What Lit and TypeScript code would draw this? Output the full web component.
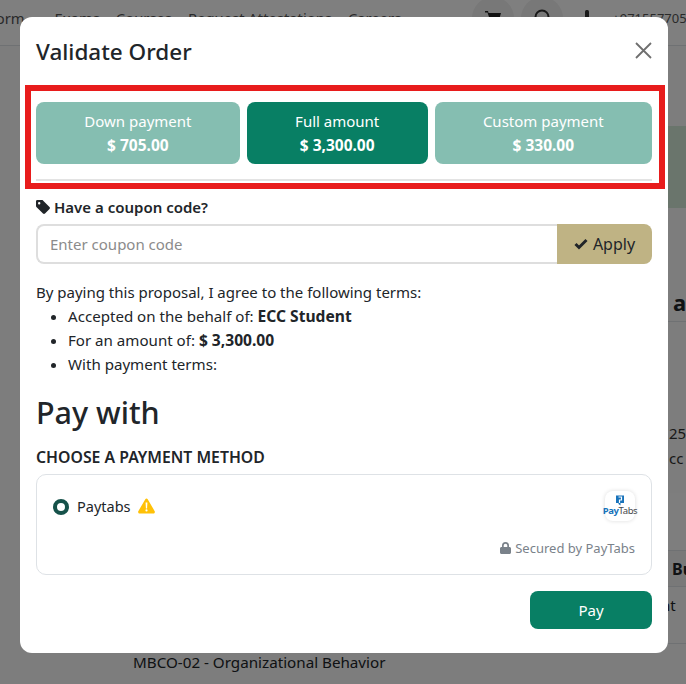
import { LitElement, html, css } from "lit";
import { customElement } from "lit/decorators.js";

const plans = [
  { name: "Down payment", amount: "$ 705.00", active: false },
  { name: "Full amount", amount: "$ 3,300.00", active: true },
  { name: "Custom payment", amount: "$ 330.00", active: false },
];

@customElement("app-root")
export class AppRoot extends LitElement {
  static styles = css`
    :host {
      display: block;
      position: relative;
      width: 686px;
      height: 684px;
      overflow: hidden;
      background: #fafafa;
      color: #212529;
      font-family: "Noto Sans", "Open Sans", sans-serif;
      font-size: 15px;
    }
    svg {
      display: block;
      flex: none;
    }

    /* page behind the dialog */
    .nav {
      height: 46px;
      box-sizing: border-box;
      background: #fff;
      border-bottom: 1px solid #dee2e6;
      display: flex;
      align-items: flex-start;
      gap: 16px;
      white-space: nowrap;
      font-size: 14.8px;
      line-height: 36px;
      color: #555;
      margin-left: -12px;
    }
    .caret {
      display: inline-block;
      margin-left: 6px;
      vertical-align: 2px;
      border: 4px solid transparent;
      border-top-color: #222;
      border-bottom: 0;
    }
    .tools {
      display: flex;
      align-items: flex-start;
      margin-left: 55px;
    }
    .round {
      width: 42px;
      height: 42px;
      margin-top: -3px;
      margin-right: 7px;
      border-radius: 50%;
      background: #f0f0f0;
      display: flex;
      align-items: center;
      justify-content: center;
    }
    .phone-icon {
      margin: 10px 22px 0 14px;
    }
    .number {
      font-size: 13px;
    }
    .band {
      height: 82px;
      margin: 80px 0 0 133px;
      background: #d4ead9;
    }
    .side {
      margin-left: 133px;
      padding-left: 540px;
      white-space: nowrap;
      overflow: hidden;
    }
    .side.heading {
      height: 38px;
      margin-top: 76px;
      border-bottom: 1px solid #dee2e6;
      box-sizing: border-box;
      font-size: 22px;
      font-weight: 700;
      line-height: 36px;
    }
    .side.lines {
      padding-left: 536px;
      margin-top: 99px;
      height: 72px;
      line-height: 25px;
      font-size: 15px;
      color: #333;
    }
    .side.tinted {
      height: 57px;
      background: #fdfdfd;
    }
    .side.cell {
      height: 37px;
      display: flex;
      align-items: center;
      gap: 4px;
      padding-left: 535px;
      border-top: 1px solid #dee2e6;
      border-bottom: 1px solid #dee2e6;
      background: #f3f3f3;
      box-sizing: border-box;
      font-weight: 700;
      font-size: 16px;
    }
    .book {
      width: 2px;
      height: 14px;
      background: #2a6fb5;
    }
    .side.end {
      height: 57px;
      border-bottom: 1px solid #dee2e6;
      box-sizing: border-box;
      padding-left: 528px;
      line-height: 36px;
    }
    .course {
      padding-left: 133px;
      margin-top: 7px;
      font-size: 15.2px;
      line-height: 22px;
    }

    /* dialog */
    .backdrop {
      position: absolute;
      inset: 0;
      background: rgba(0, 0, 0, 0.5);
      padding: 17px 18px 0 20px;
      box-sizing: border-box;
    }
    .modal {
      height: 636px;
      background: #fff;
      border-radius: 12px;
      padding: 0 16px;
      box-sizing: border-box;
    }
    .head {
      height: 68px;
      display: flex;
      align-items: center;
      justify-content: space-between;
      padding-top: 2px;
      box-sizing: border-box;
    }
    .close {
      margin-bottom: 3px;
    }
    h5 {
      margin: 0;
      font-size: 22.5px;
      font-weight: 500;
      line-height: 30px;
    }
    .plans-wrap {
      position: relative;
      margin-top: 17px;
      height: 79px;
      border-bottom: 2px solid #e3e3e3;
      box-sizing: border-box;
    }
    .marker {
      position: absolute;
      left: -11px;
      right: -13px;
      top: -17px;
      height: 104px;
      border: 6px solid #e81c1c;
      box-sizing: border-box;
      pointer-events: none;
    }
    .plans {
      display: flex;
      gap: 7px;
    }
    .plan {
      flex: 1 1 auto;
      height: 62px;
      padding: 0 48px;
      box-sizing: border-box;
      border-radius: 8px;
      background: #85beb1;
      color: #fff;
      text-align: center;
      display: flex;
      flex-direction: column;
      justify-content: center;
      line-height: 24px;
      white-space: nowrap;
    }
    .plan.active {
      background: #087f64;
    }
    .plan strong {
      font-weight: 700;
      font-size: 15.5px;
    }
    .coupon-label {
      display: flex;
      align-items: center;
      gap: 4px;
      margin-top: 15px;
      height: 22px;
      font-weight: 600;
    }
    .coupon {
      display: flex;
      height: 40px;
      margin-top: 6px;
    }
    .coupon input {
      flex: 1;
      min-width: 0;
      border: 2px solid #dedede;
      border-right: 0;
      border-radius: 8px 0 0 8px;
      padding: 0 12px;
      font: inherit;
      outline: none;
    }
    .coupon input::placeholder {
      color: #8b8b8b;
      opacity: 1;
    }
    .apply {
      width: 95px;
      background: #bfb384;
      border-radius: 0 8px 8px 0;
      display: flex;
      align-items: center;
      justify-content: center;
      gap: 5px;
      font-size: 16px;
    }
    .terms {
      margin-top: 16px;
      line-height: 24px;
    }
    .terms ul {
      margin: 0;
      padding: 0 0 0 32px;
    }
    .terms li {
      height: 24px;
      font-size: 15.1px;
    }
    .terms b {
      font-size: 15.6px;
      line-height: 1;
    }
    h3 {
      margin: 15px 0 0;
      font-size: 30.5px;
      font-weight: 500;
      line-height: 42px;
    }
    .choose {
      margin-top: 14px;
      font-weight: 600;
      font-size: 15.8px;
      line-height: 20px;
      text-transform: uppercase;
      white-space: nowrap;
    }
    .methods {
      margin-top: 7px;
      height: 101px;
      border: 1px solid #dee2e6;
      border-radius: 10px;
      box-sizing: border-box;
      padding: 16px 16px 0;
    }
    .method {
      display: flex;
      align-items: flex-start;
      height: 32px;
    }
    .radio {
      width: 16px;
      height: 16px;
      border-radius: 50%;
      border: 4.5px solid #16524a;
      box-sizing: border-box;
      margin-top: 8px;
    }
    .method-name {
      margin-left: 8px;
      line-height: 30px;
      font-size: 14.5px;
    }
    .warn {
      margin: 7px 0 0 7px;
    }
    .logo {
      margin-left: auto;
      width: 30px;
      height: 30px;
      border-radius: 8px;
      background: #fff;
      box-shadow: 0 0 4px rgba(0, 0, 0, 0.14);
      display: flex;
      flex-direction: column;
      align-items: center;
      padding-top: 4px;
      box-sizing: border-box;
    }
    .logo-text {
      font-size: 9.5px;
      line-height: 9px;
      font-weight: 700;
      letter-spacing: -0.4px;
      color: #1873bb;
      white-space: nowrap;
    }
    .logo-text span {
      color: #45494d;
      font-weight: 400;
    }
    .secured {
      display: flex;
      justify-content: flex-end;
      align-items: center;
      gap: 4px;
      margin-top: 16px;
      font-size: 13px;
      line-height: 18px;
      color: #7a828a;
    }
    .actions {
      display: flex;
      justify-content: flex-end;
      margin-top: 16px;
    }
    .pay {
      width: 122px;
      height: 38px;
      border-radius: 8px;
      background: #087f64;
      color: #fff;
      display: flex;
      align-items: center;
      justify-content: center;
    }
  `;

  render() {
    return html`
      <div class="nav">
        <span>Form<i class="caret"></i></span>
        <span>Exams</span>
        <span>Courses</span>
        <span>Request Attestations</span>
        <span>Careers</span>
        <div class="tools">
          <div class="round">
            <svg width="16" height="14" viewBox="0 0 16 14" fill="#222">
              <path d="M0 0h3l.5 2H16l-2 7H5L2.500 1.500H0ZM5 11a1.500 1.500 0 1 1 0 3 1.500 1.500 0 0 1 0-3ZM12 11a1.500 1.500 0 1 1 0 3 1.500 1.500 0 0 1 0-3Z" />
            </svg>
          </div>
          <div class="round">
            <svg width="18" height="18" viewBox="0 0 18 18" fill="none" stroke="#333" stroke-width="2">
              <circle cx="9" cy="8" r="6.500" />
              <path d="M14 13l3 4" />
            </svg>
          </div>
          <svg class="phone-icon" width="6" height="16" viewBox="0 0 6 16" fill="#333">
            <rect x="1" width="4" height="16" rx="1.500" />
          </svg>
          <span class="number">+971557705</span>
        </div>
      </div>
      <div class="band"></div>
      <div class="side heading">a</div>
      <div class="side lines">25<br />cc</div>
      <div class="side tinted"></div>
      <div class="side cell"><i class="book"></i>Bu</div>
      <div class="side end">nt</div>
      <div class="course">MBCO-02 - Organizational Behavior</div>

      <div class="backdrop">
        <div class="modal">
          <div class="head">
            <h5>Validate Order</h5>
            <svg class="close" width="17" height="17" viewBox="0 0 17 17" fill="none" stroke="#6f6f6f" stroke-width="1.800">
              <path d="M1 1 16 16M16 1 1 16" />
            </svg>
          </div>

          <div class="plans-wrap">
            <div class="marker"></div>
            <div class="plans">
              ${plans.map(
                (p) => html`
                  <div class="plan ${p.active ? "active" : ""}">
                    <span>${p.name}</span>
                    <strong>${p.amount}</strong>
                  </div>
                `
              )}
            </div>
          </div>

          <div class="coupon-label">
            <svg width="14" height="14" viewBox="0 0 14 14" fill="#212529">
              <path d="M0 1.300C0 .6.6 0 1.300 0H6c.4 0 .7.2 1 .4l6.500 6.500c.6.6.6 1.400 0 2L9 13.500c-.6.6-1.400.6-2 0L.4 7C.2 6.700 0 6.400 0 6ZM3.200 2A1.200 1.200 0 1 0 3.200 4.400 1.200 1.200 0 0 0 3.200 2Z" fill-rule="evenodd" />
            </svg>
            <span>Have a coupon code?</span>
          </div>
          <div class="coupon">
            <input placeholder="Enter coupon code" />
            <div class="apply">
              <svg width="14" height="12" viewBox="0 0 14 12" fill="none" stroke="#212529" stroke-width="3">
                <path d="M1.500 6 5 9.500 12.500 2" />
              </svg>
              <span>Apply</span>
            </div>
          </div>

          <div class="terms">
            By paying this proposal, I agree to the following terms:
            <ul>
              <li>Accepted on the behalf of: <b>ECC Student</b></li>
              <li>For an amount of: <b>$ 3,300.00</b></li>
              <li>With payment terms:</li>
            </ul>
          </div>

          <h3>Pay with</h3>
          <div class="choose">Choose a payment method</div>

          <div class="methods">
            <div class="method">
              <div class="radio"></div>
              <span class="method-name">Paytabs</span>
              <svg class="warn" width="17" height="16" viewBox="0 0 17 16">
                <path d="M8.500 0.500c.5 0 .9.300 1.200.700l7 12c.5.900-.1 2.300-1.200 2.300H1.500C.4 15.500-.200 14.100.300 13.200l7-12c.3-.4.700-.7 1.200-.7Z" fill="#ffc107" />
                <path d="M7.600 4.500h1.800l-.3 6H7.900ZM8.500 11.300a1.100 1.100 0 1 1 0 2.200 1.100 1.100 0 0 1 0-2.200Z" fill="#fff" />
              </svg>
              <div class="logo">
                <svg width="10" height="11" viewBox="0 0 10 11" fill="none">
                  <path d="M1 0.500H9V8H5.500V10.500L3.500 9V8H1Z" fill="#1873bb" />
                  <path d="M3.500 2H6.500V5H4.500V8" stroke="#fff" stroke-width="1.200" />
                </svg>
                <div class="logo-text">Pay<span>Tabs</span></div>
              </div>
            </div>
            <div class="secured">
              <svg width="11" height="12" viewBox="0 0 11 12" fill="#7a828a">
                <path d="M2 5V3.500a3.500 3.500 0 0 1 7 0V5h.500c.8 0 1.500.7 1.500 1.500v4c0 .8-.7 1.500-1.500 1.500h-8C.7 12 0 11.300 0 10.500v-4C0 5.700.7 5 1.500 5ZM3.700 5h3.600V3.500a1.800 1.800 0 0 0-3.600 0Z" fill-rule="evenodd" />
              </svg>
              <span>Secured by PayTabs</span>
            </div>
          </div>

          <div class="actions">
            <div class="pay">Pay</div>
          </div>
        </div>
      </div>
    `;
  }
}
